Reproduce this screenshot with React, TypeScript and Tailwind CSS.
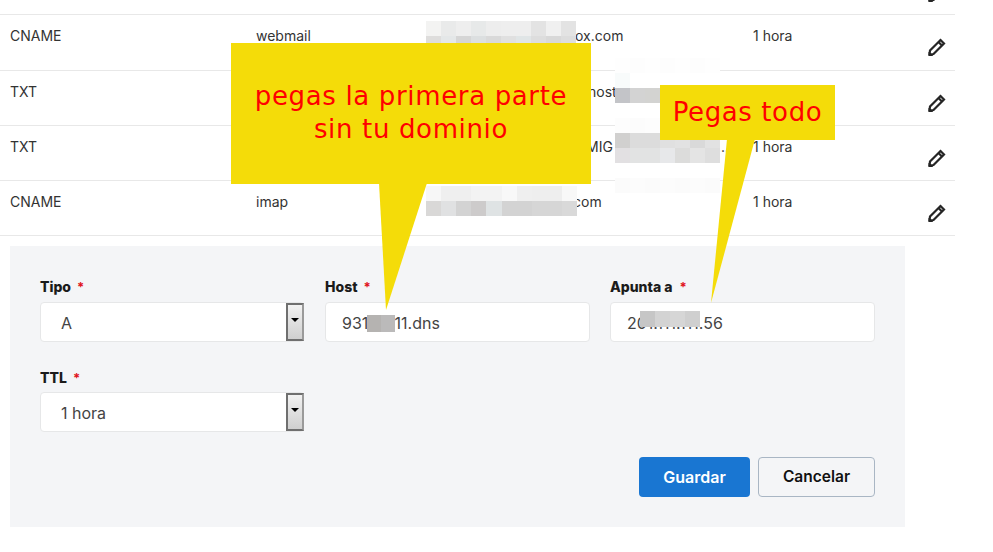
const UI = "font-['Inter','Liberation_Sans',sans-serif]";

type Cell = [number, number, string];

function Mosaic({ rows, cols, cells, className }: { rows: number; cols: number; cells: string[][]; className: string }) {
  const rects: Cell[] = [];
  cells.forEach((r, y) => r.forEach((c, x) => rects.push([x, y, c])));
  return (
    <svg className={className} viewBox={`0 0 ${cols * 15} ${rows * 15}`} preserveAspectRatio="none" shapeRendering="crispEdges">
      {rects.map(([x, y, c]) => (
        <rect key={`${x}-${y}`} x={x * 15} y={y * 15} width="15" height="15" fill={c} />
      ))}
    </svg>
  );
}

function Pencil() {
  return (
    <svg width="20" height="20" viewBox="0 0 20 20" fill="none" stroke="#262626" strokeWidth="2.2" strokeLinejoin="miter">
      <path d="M2.5 17.5 L3 13.5 L13.5 3 L17 6.5 L6.5 17 Z" />
      <path d="M11.5 5 L15 8.5" />
      <path d="M2 18.5 L5.5 18.5 L2 15 Z" fill="#262626" strokeWidth="1" />
    </svg>
  );
}

function Row({ type, name, value, h, ttl = true }: { type: string; name?: string; value: React.ReactNode; h: string; ttl?: boolean }) {
  return (
    <div className={`grid grid-cols-[246px_170px_327px_173px_1fr] border-t border-[#e8e8e8] pl-[10px] text-[14px] leading-5 text-[#333] ${h}`}>
      <div className="pt-[11px]">{type}</div>
      <div className="pt-[11px]">{name}</div>
      <div className="whitespace-nowrap pt-[11px]">{value}</div>
      <div className="pt-[11px]">{ttl ? "1 hora" : ""}</div>
      <div className="pl-px pt-[22px]">
        <Pencil />
      </div>
    </div>
  );
}

function Label({ text, gap }: { text: string; gap: string }) {
  return (
    <div className="flex h-[16px] items-center text-[14px] font-extrabold leading-4 text-[#1b1b1b]">
      {text}
      <span className={`text-[13px] font-bold text-[#e0141c] ${gap}`}>*</span>
    </div>
  );
}

function SelectBox({ value, mt }: { value: string; mt: string }) {
  return (
    <div className={`flex h-10 w-[264px] items-center justify-between rounded-[4px] border border-[#e6e7e8] bg-white pl-5 text-[16px] text-[#444] ${mt}`}>
      <span className="pt-[2px]">{value}</span>
      <div className="-mr-px flex h-[38px] w-[18px] items-center justify-center border-2 border-[#6f6f6f] border-r-[#9a9a9a] bg-gradient-to-b from-[#f2f2f2] to-[#cfcfcf]">
        <div className="mb-1 h-0 w-0 border-x-[4px] border-t-[4px] border-x-transparent border-t-black" />
      </div>
    </div>
  );
}

function InputBox({ value, width }: { value: string; width: string }) {
  return (
    <div className={`mt-[7px] flex h-10 items-center rounded-[4px] border border-[#e6e7e8] bg-white pl-4 pt-[2px] text-[16px] text-[#444] ${width}`}>
      {value}
    </div>
  );
}

export default function App() {
  return (
    <div className={`relative h-[552px] w-[993px] overflow-hidden bg-white ${UI}`}>
      <div className="h-[14px] w-[955px] overflow-hidden">
        <div className="-mt-[17px] ml-[927px]">
          <Pencil />
        </div>
      </div>
      <div className="w-[955px]">
        <Row h="h-[56px]" type="CNAME" name="webmail" value={<span className="pl-[149px]">ox.com</span>} />
        <Row h="h-[55px]" type="TXT" ttl={false} value={<span className="pl-[162px]">host</span>} />
        <Row
          h="h-[55px]"
          type="TXT"
          value={
            <>
              <span className="pl-[160px]">MIG</span>
              <span className="pl-[104px]">...</span>
            </>
          }
        />
        <Row h="h-[55px]" type="CNAME" name="imap" value={<span className="pl-[147px]">com</span>} />
        <div className="border-t border-[#e8e8e8]" />
      </div>

      <div className="ml-[10px] mt-[10px] h-[281px] w-[895px] bg-[#f4f5f7] pl-[30px] pt-[33px]">
        <div className="grid grid-cols-[285px_285px_265px]">
          <div>
            <Label text="Tipo" gap="ml-[6px]" />
            <SelectBox value="A" mt="mt-[7px]" />
          </div>
          <div>
            <Label text="Host" gap="ml-[6px]" />
            <InputBox value="931xxx11.dns" width="w-[265px]" />
          </div>
          <div>
            <Label text="Apunta a" gap="ml-[7px]" />
            <InputBox value="201.111.111.56" width="w-[265px]" />
          </div>
        </div>
        <div className="mt-[28px]">
          <Label text="TTL" gap="ml-[6px]" />
          <SelectBox value="1 hora" mt="mt-[6px]" />
        </div>
        <div className="mt-[25px] flex justify-end gap-2 pr-[30px] font-semibold">
          <button className="h-10 w-[111px] rounded-[4px] bg-[#1976d2] text-[16px] text-white">Guardar</button>
          <button className="h-10 w-[117px] rounded-[4px] border border-[#a9b6c4] text-[15.5px] text-[#111]">Cancelar</button>
        </div>
      </div>

      {/* pixelated redactions pasted over the capture */}
      <Mosaic
        className="absolute left-[426px] top-[21px] h-[30px] w-[150px]"
        rows={2}
        cols={10}
        cells={[
          ["#f3f3f2", "#e9eaea", "#eeeeee", "#e7e9e9", "#ededed", "#eeeeee", "#eeeeee", "#e3e3e3", "#f0f0f0", "#e3e3e3"],
          ["#dedddc", "#e4e7e8", "#d5d5d5", "#dcdfe0", "#d9d9d9", "#e0e0e0", "#e0e5e6", "#dddddd", "#d8d8d8", "#dddddd"],
        ]}
      />
      <Mosaic
        className="absolute left-[426px] top-[186px] h-[30px] w-[151px]"
        rows={2}
        cols={10}
        cells={[
          ["#f7f7f7", "#efefef", "#efefef", "#f3f3f3", "#f3f3f3", "#f8f8f8", "#efefef", "#eeeeee", "#eeeeee", "#f8f8f8"],
          ["#d9d8d7", "#e0e1e2", "#d3d3d3", "#cdcbcb", "#dfe3e4", "#d3d3d3", "#d3d3d3", "#d6d6d6", "#d6d6d6", "#d9d9d9"],
        ]}
      />
      <Mosaic
        className="absolute left-[615px] top-[58px] h-[45px] w-[105px]"
        rows={3}
        cols={7}
        cells={[
          ["#fefefe", "#fdfdfd", "#fefefe", "#fdfdfd", "#fefefe", "#fdfdfd", "#fefefe"],
          ["#f8fbfb", "#ffffff", "#ffffff", "#ffffff", "#ffffff", "#ffffff", "#ffffff"],
          ["#c3c4c8", "#d3d3d3", "#d3d3d1", "#d8d8d8", "#e0e0e0", "#e6e6e6", "#e6e6e6"],
        ]}
      />
      <Mosaic
        className="absolute left-[615px] top-[118px] h-[75px] w-[105px]"
        rows={5}
        cols={7}
        cells={[
          ["#fdfdfd", "#fcfcfc", "#fdfdfd", "#fdfdfd", "#fcfcfc", "#fdfdfd", "#fdfdfd"],
          ["#d1d0cf", "#dcdcdc", "#dcdcdc", "#e0e0e0", "#e2e2e2", "#d9d9d9", "#e2e2e2"],
          ["#e2e0e2", "#e2e3e3", "#e2e3e3", "#e7e8ea", "#dcdcdb", "#e4e4e4", "#dedede"],
          ["#ffffff", "#ffffff", "#ffffff", "#ffffff", "#ffffff", "#ffffff", "#ffffff"],
          ["#fbfbfb", "#fcfcfc", "#fbfbfb", "#fcfcfc", "#fbfbfb", "#fcfcfc", "#fbfbfb"],
        ]}
      />
      <Mosaic
        className="absolute left-[367px] top-[315px] h-[17px] w-[28px]"
        rows={1}
        cols={2}
        cells={[["#b5b3b1", "#bbbaba"]]}
      />
      <Mosaic
        className="absolute left-[640px] top-[311px] h-[16px] w-[60px]"
        rows={1}
        cols={4}
        cells={[["#c6c6c6", "#d3d3d3", "#d6d6d6", "#cfcfcf"]]}
      />

      {/* callouts */}
      <svg className="absolute left-0 top-0 h-[552px] w-[993px]" viewBox="0 0 993 552">
        <polygon points="379,183 427,183 386,310" fill="#f4dc09" />
        <polygon points="727,139 755,139 711,303" fill="#f4dc09" />
      </svg>
      <div className="absolute left-[231px] top-[43px] flex h-[141px] w-[360px] items-center justify-center bg-[#f4dc09] pb-[2px] text-center font-['DejaVu_Sans',sans-serif] text-[26px] leading-[33px] tracking-[0.65px] text-[#ff0000]">
        <div>
          pegas la primera parte
          <br />
          sin tu dominio
        </div>
      </div>
      <div className="absolute left-[660px] top-[85px] flex h-[55px] w-[175px] items-center justify-center bg-[#f4dc09] pb-[1px] font-['DejaVu_Sans',sans-serif] text-[26px] leading-[33px] tracking-[0.6px] text-[#ff0000]">
        Pegas todo
      </div>
    </div>
  );
}
